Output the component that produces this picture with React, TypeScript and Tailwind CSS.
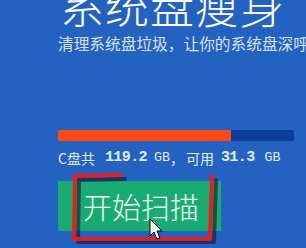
import React from "react";

export default function App() {
  const mono = { fontFamily: '"Liberation Mono", monospace' };
  return (
    <div className="relative w-[306px] h-[248px] overflow-hidden bg-[#2462c2]" style={{ fontFamily: '"Noto Sans CJK SC", "Noto Sans", sans-serif' }}>
      <div className="flex flex-col pl-[58px]">
        <div className="mt-[-17px] h-[44px] text-[44px] leading-none text-white font-light tracking-[1px] whitespace-nowrap pl-[2px]">
          系统盘瘦身
        </div>
        <div className="mt-[8px] h-[18px] text-[15.7px] leading-[18px] text-[#d6e2f4] whitespace-nowrap">
          清理系统盘垃圾，让你的系统盘深呼吸
        </div>
        <div className="mt-[77px] w-[236px] h-[11px] bg-[#0c3f9c] flex">
          <div className="w-[173px] h-full bg-[#fb4a12]" />
        </div>
        <div className="mt-[9px] h-[16px] flex items-center text-[14px] leading-[16px] text-[#e2ecf8] whitespace-nowrap">
          <span>C盘共</span>
          <span className="ml-[10px] font-bold text-[15px] tracking-[-0.6px]" style={mono}>119.2</span>
          <span className="ml-[7px] text-[13.3px]" style={mono}>GB</span>
          <span className="text-[14px] w-[14px]">，</span>
          <span className="ml-[2px]">可用</span>
          <span className="ml-[7px] font-bold text-[15px] tracking-[-0.6px]" style={mono}>31.3</span>
          <span className="ml-[10px] text-[13.3px]" style={mono}>GB</span>
        </div>
        <div className="mt-[15px] w-[163px] h-[50px] bg-[#1aab72] flex items-center pl-[25px] text-[29px] leading-none text-[#eef8f2] font-light whitespace-nowrap">
          开始扫描
        </div>
      </div>
      <svg className="absolute left-0 top-0" width="306" height="248" viewBox="0 0 306 248">
        <g fill="none" stroke="#101830" strokeWidth="4" strokeLinecap="round" strokeLinejoin="round" opacity="0.6">
          <path d="M123 177 L77 178 L76 240 L212 240 L214 178" transform="translate(2,2)" />
        </g>
        <g fill="none" stroke="#e3201c" strokeWidth="4" strokeLinecap="round" strokeLinejoin="round">
          <path d="M121 175 L75 176 L74 239 L210 239 L212 176" />
        </g>
        <path d="M150 219 L150 236 L154 232 L157 239 L160 238 L157 231 L162 231 Z" fill="#ffffff" stroke="#000000" strokeWidth="1" strokeLinejoin="round" />
      </svg>
    </div>
  );
}
